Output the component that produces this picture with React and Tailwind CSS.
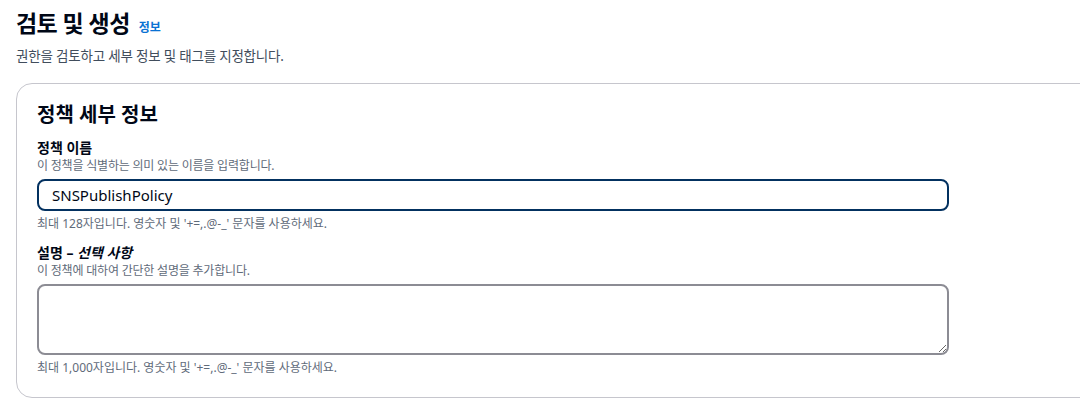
import React from 'react'

const font = { fontFamily: '"Noto Sans", "Noto Sans CJK KR", sans-serif' }

function Field({ label, optional, desc, hint, children }) {
  return (
    <div className="flex flex-col">
      <div className="text-[14px] leading-[18px] font-bold text-[#000716]">
        {label}
        {optional && <> – <i>{optional}</i></>}
      </div>
      <div className="mt-px text-[12px] leading-[16px] tracking-[-0.2px] text-[#5f6b7a]">{desc}</div>
      <div className="mt-[5px]">{children}</div>
      <div className="mt-[5px] text-[12px] leading-[16px] text-[#5f6b7a]">{hint}</div>
    </div>
  )
}

export default function App() {
  return (
    <div className="w-full h-[414px] overflow-hidden bg-white text-[#000716]" style={font}>
      <div className="pl-4 pt-[8px]">
        <div className="flex items-baseline gap-[9px]">
          <h1 className="text-[23px] leading-[30px] font-bold tracking-tight">검토 및 생성</h1>
          <span className="text-[12px] font-bold text-[#0972d3]">정보</span>
        </div>
        <p className="mt-[8px] text-[13.5px] leading-[20px] tracking-[-0.2px] text-[#414d5c]">
          권한을 검토하고 세부 정보 및 태그를 지정합니다.
        </p>

        <div className="mt-[17px] w-[1120px] border border-[#c6c6cd] rounded-2xl pl-5 pt-[19px] pb-[21px]">
          <h2 className="text-[20px] leading-[24px] font-bold">정책 세부 정보</h2>

          <div className="mt-[12px] w-[912px]">
            <Field
              label="정책 이름"
              desc="이 정책을 식별하는 의미 있는 이름을 입력합니다."
              hint="최대 128자입니다. 영숫자 및 '+=,.@-_' 문자를 사용하세요."
            >
              <input
                defaultValue="SNSPublishPolicy"
                className="w-full h-[32px] px-[13px] border-2 border-[#033160] rounded-lg text-[15px] text-[#000716] outline-none"
                style={font}
              />
            </Field>
          </div>

          <div className="mt-[12px] w-[912px]">
            <Field
              label="설명"
              optional="선택 사항"
              desc="이 정책에 대하여 간단한 설명을 추가합니다."
              hint="최대 1,000자입니다. 영숫자 및 '+=,.@-_' 문자를 사용하세요."
            >
              <textarea
                className="block w-full h-[71px] px-[13px] py-1 border-2 border-[#8c8c94] rounded-lg text-[14px] outline-none"
                style={font}
              />
            </Field>
          </div>
        </div>
      </div>
    </div>
  )
}
